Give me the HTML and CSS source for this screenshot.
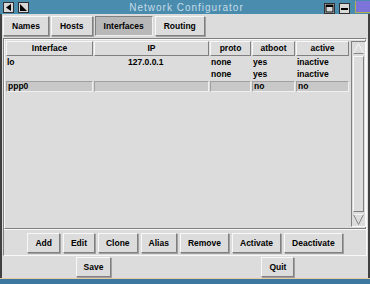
FILE: index.html
```html
<!DOCTYPE html>
<html lang="en">
<head>
  <meta charset="UTF-8">
  <title>Network Configurator</title>
  <link rel="stylesheet" href="styles.css">
</head>
<body>
  <div class="window">
    <div class="titlebar">
      <div class="tb-left">
        <span class="tb-btn"><svg width="9" height="9" viewBox="0 0 9 9"><path d="M7 1 L2 4.5 L7 8 Z" fill="#000"/></svg></span>
        <span class="tb-btn"><svg width="9" height="9" viewBox="0 0 9 9"><path d="M1 1 L8 8 L1 8 Z" fill="#000"/></svg></span>
      </div>
      <div class="title">Network Configurator</div>
      <div class="tb-right">
        <span class="tb-btn"><svg width="9" height="9" viewBox="0 0 9 9"><rect x="1" y="1" width="7" height="7" fill="none" stroke="#000"/><rect x="1" y="1" width="7" height="2" fill="#000"/></svg></span>
        <span class="tb-btn"><svg width="9" height="9" viewBox="0 0 9 9"><rect x="1" y="4" width="7" height="2" fill="#000"/></svg></span>
        <span class="tb-corner"></span>
      </div>
    </div>

    <div class="tabs">
      <button class="btn">Names</button>
      <button class="btn">Hosts</button>
      <button class="btn pressed">Interfaces</button>
      <button class="btn">Routing</button>
    </div>

    <div class="panel">
      <div class="list">
        <div class="grid">
          <div class="hd">Interface</div>
          <div class="hd">IP</div>
          <div class="hd">proto</div>
          <div class="hd">atboot</div>
          <div class="hd">active</div>

          <div class="cell">lo</div>
          <div class="cell ip">127.0.0.1</div>
          <div class="cell">none</div>
          <div class="cell">yes</div>
          <div class="cell">inactive</div>

          <div class="cell"></div>
          <div class="cell ip"></div>
          <div class="cell">none</div>
          <div class="cell">yes</div>
          <div class="cell">inactive</div>

          <div class="cell sel"><span>ppp0</span></div>
          <div class="cell sel"><span></span></div>
          <div class="cell sel"><span></span></div>
          <div class="cell sel"><span>no</span></div>
          <div class="cell sel"><span>no</span></div>
        </div>
        <div class="scrollbar">
          <span class="arrow"><svg width="13" height="13" viewBox="0 0 13 13"><path d="M1.5 11.5 L6.5 1.5 L11.5 11.5 Z" fill="none" stroke="#f4f4f4"/><path d="M11.5 11.5 L1.5 11.5" stroke="#888"/></svg></span>
          <span class="trough"></span>
          <span class="arrow"><svg width="13" height="13" viewBox="0 0 13 13"><path d="M1.5 1.5 L6.5 11.5 L11.5 1.5 Z" fill="none" stroke="#888"/><path d="M1.5 1.5 L11.5 1.5" stroke="#f4f4f4"/></svg></span>
        </div>
      </div>

      <div class="actions">
        <button class="btn">Add</button>
        <button class="btn">Edit</button>
        <button class="btn">Clone</button>
        <button class="btn">Alias</button>
        <button class="btn">Remove</button>
        <button class="btn">Activate</button>
        <button class="btn">Deactivate</button>
      </div>
    </div>

    <div class="footer">
      <button class="btn">Save</button>
      <button class="btn">Quit</button>
    </div>
  </div>
  <div class="taskbar"></div>
</body>
</html>
```

FILE: styles.css
```css
body {
  margin: 0;
  padding: 0;
  width: 370px;
  height: 284px;
  overflow: hidden;
  background: #dcdcdc;
  font-family: 'Liberation Sans', Arial, sans-serif;
  font-size: 8.5px;
  font-weight: bold;
  color: #000;
}

.window {
  height: 278px;
  display: flex;
  flex-direction: column;
  border-left: 2px solid #404040;
  border-right: 2px solid #404040;
  box-sizing: border-box;
  background: #dcdcdc;
}

.titlebar {
  height: 16px;
  background: #4a8cae;
  display: flex;
  align-items: center;
  justify-content: space-between;
  margin: 0 -2px;
}

.tb-left, .tb-right {
  display: flex;
  align-items: center;
  gap: 4px;
  padding: 0 3px;
}

.tb-right {
  padding-right: 0;
  align-self: flex-start;
  padding-top: 3px;
}

.tb-btn {
  width: 11px;
  height: 11px;
  background: #d8d8d8;
  border: 1px solid #303030;
  box-sizing: border-box;
  display: flex;
  align-items: center;
  justify-content: center;
}

.tb-corner {
  width: 14px;
  height: 11px;
  margin-top: -3px;
  background: #7c74d8;
  border-left: 1px solid #b0b050;
  border-bottom: 1px solid #b0b050;
  margin-left: 1px;
}

.title {
  flex: 1;
  text-align: center;
  color: #c4dce8;
  font-weight: normal;
  font-size: 10px;
  letter-spacing: 1px;
  padding-left: 20px;
}

.btn {
  font-family: inherit;
  font-size: 8.5px;
  font-weight: bold;
  color: #000;
  background: #dcdcdc;
  border: 1px solid;
  border-color: #f8f8f8 #808080 #808080 #f8f8f8;
  box-shadow: 1px 1px 0 #a0a0a0;
  height: 20px;
  padding: 0 7px;
  margin: 0;
}

.btn.pressed {
  background: #b8b8b8;
  border-color: #808080 #f0f0f0 #f0f0f0 #808080;
  box-shadow: none;
}

.tabs {
  display: flex;
  gap: 2px;
  padding: 2px 1px 2px 1px;
}

.tabs .btn {
  padding: 0 8px;
}

.panel {
  margin: 0 1px;
  border: 1px solid;
  border-color: #808080 #f8f8f8 #f8f8f8 #808080;
  display: flex;
  flex-direction: column;
}

.list {
  height: 186px;
  display: flex;
  border: 1px solid;
  border-color: #f8f8f8 #808080 #808080 #f8f8f8;
  padding: 1px 1px 1px 1px;
  gap: 1px;
}

.grid {
  flex: 1;
  display: grid;
  grid-template-columns: 88px 116px 42px 44px 54px;
  grid-template-rows: 15px 12px 11px 14px;
  align-content: start;
}

.hd {
  text-align: center;
  border: 1px solid;
  border-color: #f8f8f8 #808080 #808080 #f8f8f8;
  line-height: 13px;
  margin-right: 1px;
}

.cell {
  padding-left: 1px;
  line-height: 11px;
  padding-top: 1px;
  white-space: nowrap;
}

.cell.ip {
  padding-left: 34px;
}

.cell.sel {
  padding: 2px 1px 0 0;
}

.cell.sel span {
  display: block;
  height: 11px;
  background: #c8c8c8;
  border: 1px solid;
  border-color: #a0a0a0 #f0f0f0 #f0f0f0 #a0a0a0;
  box-sizing: border-box;
  padding-left: 1px;
  line-height: 9px;
}

.scrollbar {
  width: 14px;
  display: flex;
  flex-direction: column;
  border: 1px solid;
  border-color: #808080 #f8f8f8 #f8f8f8 #808080;
}

.arrow {
  height: 13px;
  display: flex;
}

.trough {
  flex: 1;
  margin: 1px;
  border: 1px solid;
  border-color: #f8f8f8 #808080 #808080 #f8f8f8;
}

.actions {
  display: flex;
  justify-content: center;
  gap: 3px;
  padding: 3px 0 2px;
  border-top: 1px solid #f8f8f8;
}

.footer {
  display: flex;
  justify-content: center;
  gap: 150px;
  padding: 1px 0;
}

.taskbar {
  height: 6px;
  background: #3c78a0;
  border-top: 1px solid #e8c8a0;
}
```
